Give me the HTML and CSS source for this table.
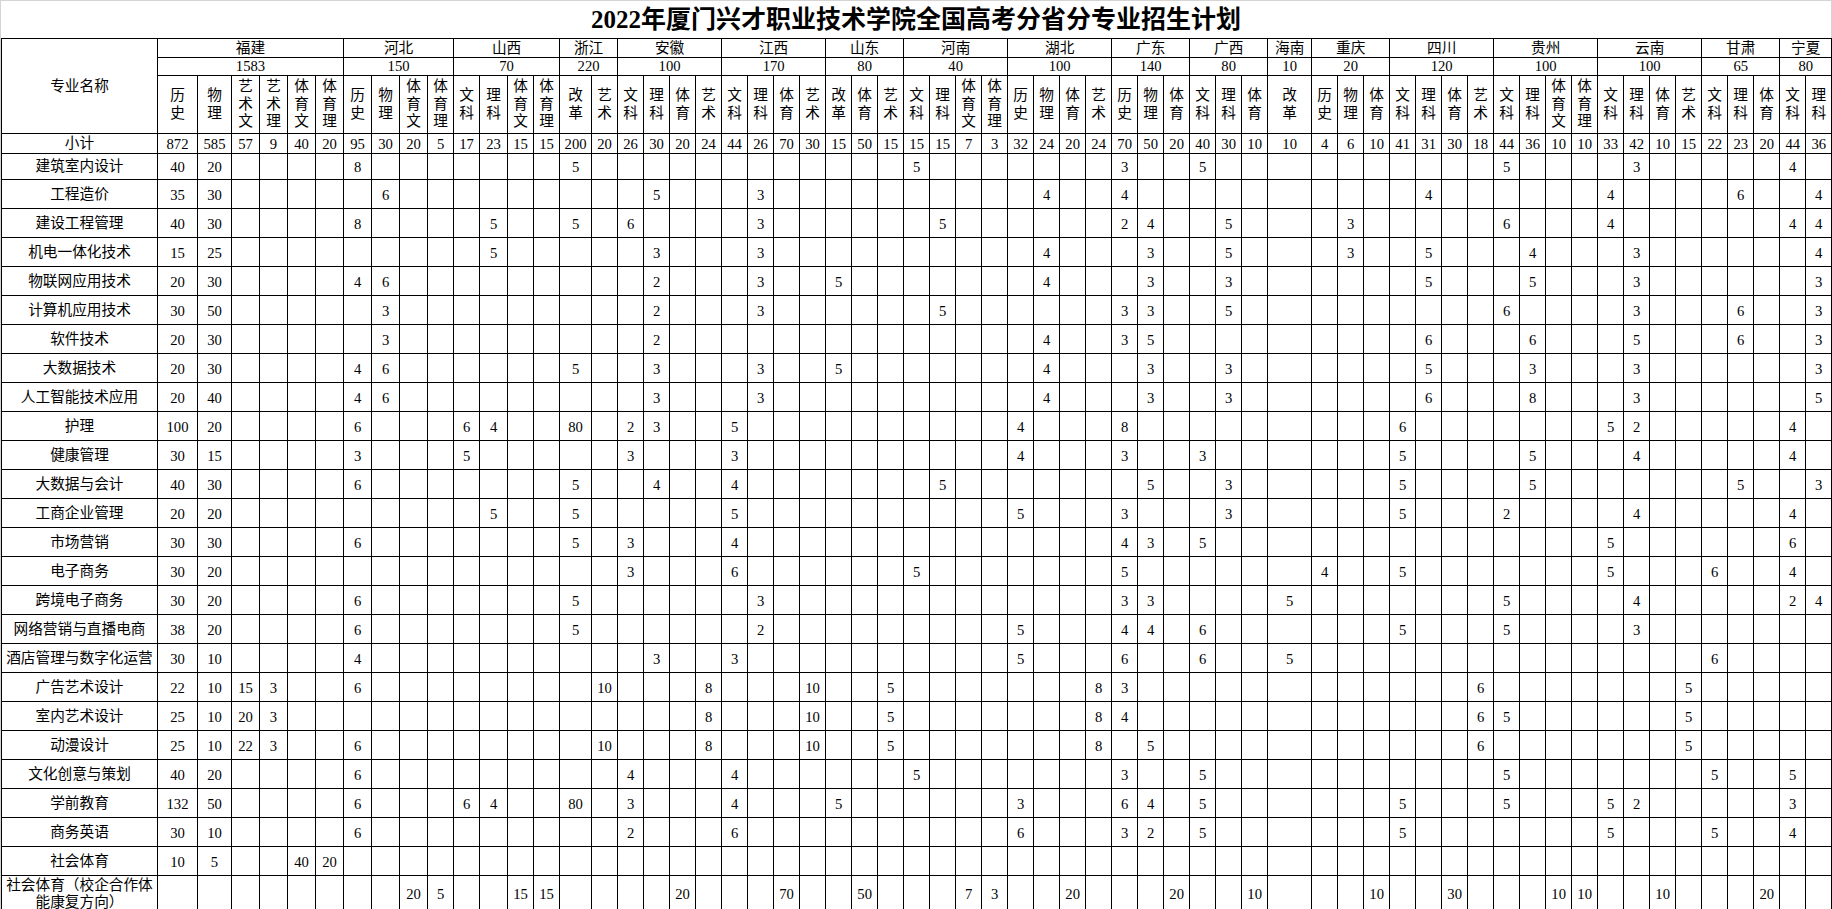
FILE: index.html
```html
<!DOCTYPE html>
<html lang="zh-CN">
<head>
<meta charset="utf-8">
<title>2022年厦门兴才职业技术学院全国高考分省分专业招生计划</title>
<link rel="stylesheet" href="styles.css">
</head>
<body>
<div class="sheet">
<div class="title">2022年厦门兴才职业技术学院全国高考分省分专业招生计划</div>
<table class="plan">
<colgroup>
<col class="c156">
<col class="c40"><col class="c34"><col class="c28"><col class="c28"><col class="c28"><col class="c28">
<col class="c28"><col class="c28"><col class="c28"><col class="c26">
<col class="c26"><col class="c28"><col class="c26"><col class="c26">
<col class="c32"><col class="c26">
<col class="c26"><col class="c26"><col class="c26"><col class="c26">
<col class="c26"><col class="c26"><col class="c26"><col class="c26">
<col class="c26"><col class="c26"><col class="c26">
<col class="c26"><col class="c26"><col class="c26"><col class="c26">
<col class="c26"><col class="c26"><col class="c26"><col class="c26">
<col class="c26"><col class="c26"><col class="c26">
<col class="c26"><col class="c26"><col class="c26">
<col class="c44">
<col class="c26"><col class="c26"><col class="c26">
<col class="c26"><col class="c26"><col class="c26"><col class="c26">
<col class="c26"><col class="c26"><col class="c26"><col class="c26">
<col class="c26"><col class="c26"><col class="c26"><col class="c26">
<col class="c26"><col class="c26"><col class="c26">
<col class="c26"><col class="c26">
</colgroup>
<thead>
<tr class="h-prov">
<th rowspan="3" class="nm">专业名称</th>
<th colspan="6">福建</th><th colspan="4">河北</th><th colspan="4">山西</th><th colspan="2">浙江</th><th colspan="4">安徽</th><th colspan="4">江西</th><th colspan="3">山东</th><th colspan="4">河南</th><th colspan="4">湖北</th><th colspan="3">广东</th><th colspan="3">广西</th><th>海南</th><th colspan="3">重庆</th><th colspan="4">四川</th><th colspan="4">贵州</th><th colspan="4">云南</th><th colspan="3">甘肃</th><th colspan="2">宁夏</th>
</tr>
<tr class="h-total">
<th colspan="6">1583</th><th colspan="4">150</th><th colspan="4">70</th><th colspan="2">220</th><th colspan="4">100</th><th colspan="4">170</th><th colspan="3">80</th><th colspan="4">40</th><th colspan="4">100</th><th colspan="3">140</th><th colspan="3">80</th><th>10</th><th colspan="3">20</th><th colspan="4">120</th><th colspan="4">100</th><th colspan="4">100</th><th colspan="3">65</th><th colspan="2">80</th>
</tr>
<tr class="h-subj">
<th>历<br>史</th><th>物<br>理</th><th>艺<br>术<br>文</th><th>艺<br>术<br>理</th><th>体<br>育<br>文</th><th>体<br>育<br>理</th>
<th>历<br>史</th><th>物<br>理</th><th>体<br>育<br>文</th><th>体<br>育<br>理</th>
<th>文<br>科</th><th>理<br>科</th><th>体<br>育<br>文</th><th>体<br>育<br>理</th>
<th>改<br>革</th><th>艺<br>术</th>
<th>文<br>科</th><th>理<br>科</th><th>体<br>育</th><th>艺<br>术</th>
<th>文<br>科</th><th>理<br>科</th><th>体<br>育</th><th>艺<br>术</th>
<th>改<br>革</th><th>体<br>育</th><th>艺<br>术</th>
<th>文<br>科</th><th>理<br>科</th><th>体<br>育<br>文</th><th>体<br>育<br>理</th>
<th>历<br>史</th><th>物<br>理</th><th>体<br>育</th><th>艺<br>术</th>
<th>历<br>史</th><th>物<br>理</th><th>体<br>育</th>
<th>文<br>科</th><th>理<br>科</th><th>体<br>育</th>
<th>改<br>革</th>
<th>历<br>史</th><th>物<br>理</th><th>体<br>育</th>
<th>文<br>科</th><th>理<br>科</th><th>体<br>育</th><th>艺<br>术</th>
<th>文<br>科</th><th>理<br>科</th><th>体<br>育<br>文</th><th>体<br>育<br>理</th>
<th>文<br>科</th><th>理<br>科</th><th>体<br>育</th><th>艺<br>术</th>
<th>文<br>科</th><th>理<br>科</th><th>体<br>育</th>
<th>文<br>科</th><th>理<br>科</th>
</tr>
</thead>
<tbody>
<tr class="r-sum"><th class="nm">小计</th>
<td>872</td><td>585</td><td>57</td><td>9</td><td>40</td><td>20</td>
<td>95</td><td>30</td><td>20</td><td>5</td>
<td>17</td><td>23</td><td>15</td><td>15</td>
<td>200</td><td>20</td>
<td>26</td><td>30</td><td>20</td><td>24</td>
<td>44</td><td>26</td><td>70</td><td>30</td>
<td>15</td><td>50</td><td>15</td>
<td>15</td><td>15</td><td>7</td><td>3</td>
<td>32</td><td>24</td><td>20</td><td>24</td>
<td>70</td><td>50</td><td>20</td>
<td>40</td><td>30</td><td>10</td>
<td>10</td>
<td>4</td><td>6</td><td>10</td>
<td>41</td><td>31</td><td>30</td><td>18</td>
<td>44</td><td>36</td><td>10</td><td>10</td>
<td>33</td><td>42</td><td>10</td><td>15</td>
<td>22</td><td>23</td><td>20</td>
<td>44</td><td>36</td>
</tr>
<tr class="r-first"><th class="nm">建筑室内设计</th>
<td>40<td>20<td><td><td><td>
<td>8<td><td><td>
<td><td><td><td>
<td>5<td>
<td><td><td><td>
<td><td><td><td>
<td><td><td>
<td>5<td><td><td>
<td><td><td><td>
<td>3<td><td>
<td>5<td><td>
<td>
<td><td><td>
<td><td><td><td>
<td>5<td><td><td>
<td><td>3<td><td>
<td><td><td>
<td>4<td>
</tr>
<tr><th class="nm">工程造价</th>
<td>35<td>30<td><td><td><td>
<td><td>6<td><td>
<td><td><td><td>
<td><td>
<td><td>5<td><td>
<td><td>3<td><td>
<td><td><td>
<td><td><td><td>
<td><td>4<td><td>
<td>4<td><td>
<td><td><td>
<td>
<td><td><td>
<td><td>4<td><td>
<td><td><td><td>
<td>4<td><td><td>
<td><td>6<td>
<td><td>4
</tr>
<tr><th class="nm">建设工程管理</th>
<td>40<td>30<td><td><td><td>
<td>8<td><td><td>
<td><td>5<td><td>
<td>5<td>
<td>6<td><td><td>
<td><td>3<td><td>
<td><td><td>
<td><td>5<td><td>
<td><td><td><td>
<td>2<td>4<td>
<td><td>5<td>
<td>
<td><td>3<td>
<td><td><td><td>
<td>6<td><td><td>
<td>4<td><td><td>
<td><td><td>
<td>4<td>4
</tr>
<tr><th class="nm">机电一体化技术</th>
<td>15<td>25<td><td><td><td>
<td><td><td><td>
<td><td>5<td><td>
<td><td>
<td><td>3<td><td>
<td><td>3<td><td>
<td><td><td>
<td><td><td><td>
<td><td>4<td><td>
<td><td>3<td>
<td><td>5<td>
<td>
<td><td>3<td>
<td><td>5<td><td>
<td><td>4<td><td>
<td><td>3<td><td>
<td><td><td>
<td><td>4
</tr>
<tr><th class="nm">物联网应用技术</th>
<td>20<td>30<td><td><td><td>
<td>4<td>6<td><td>
<td><td><td><td>
<td><td>
<td><td>2<td><td>
<td><td>3<td><td>
<td>5<td><td>
<td><td><td><td>
<td><td>4<td><td>
<td><td>3<td>
<td><td>3<td>
<td>
<td><td><td>
<td><td>5<td><td>
<td><td>5<td><td>
<td><td>3<td><td>
<td><td><td>
<td><td>3
</tr>
<tr><th class="nm">计算机应用技术</th>
<td>30<td>50<td><td><td><td>
<td><td>3<td><td>
<td><td><td><td>
<td><td>
<td><td>2<td><td>
<td><td>3<td><td>
<td><td><td>
<td><td>5<td><td>
<td><td><td><td>
<td>3<td>3<td>
<td><td>5<td>
<td>
<td><td><td>
<td><td><td><td>
<td>6<td><td><td>
<td><td>3<td><td>
<td><td>6<td>
<td><td>3
</tr>
<tr><th class="nm">软件技术</th>
<td>20<td>30<td><td><td><td>
<td><td>3<td><td>
<td><td><td><td>
<td><td>
<td><td>2<td><td>
<td><td><td><td>
<td><td><td>
<td><td><td><td>
<td><td>4<td><td>
<td>3<td>5<td>
<td><td><td>
<td>
<td><td><td>
<td><td>6<td><td>
<td><td>6<td><td>
<td><td>5<td><td>
<td><td>6<td>
<td><td>3
</tr>
<tr><th class="nm">大数据技术</th>
<td>20<td>30<td><td><td><td>
<td>4<td>6<td><td>
<td><td><td><td>
<td>5<td>
<td><td>3<td><td>
<td><td>3<td><td>
<td>5<td><td>
<td><td><td><td>
<td><td>4<td><td>
<td><td>3<td>
<td><td>3<td>
<td>
<td><td><td>
<td><td>5<td><td>
<td><td>3<td><td>
<td><td>3<td><td>
<td><td><td>
<td><td>3
</tr>
<tr><th class="nm">人工智能技术应用</th>
<td>20<td>40<td><td><td><td>
<td>4<td>6<td><td>
<td><td><td><td>
<td><td>
<td><td>3<td><td>
<td><td>3<td><td>
<td><td><td>
<td><td><td><td>
<td><td>4<td><td>
<td><td>3<td>
<td><td>3<td>
<td>
<td><td><td>
<td><td>6<td><td>
<td><td>8<td><td>
<td><td>3<td><td>
<td><td><td>
<td><td>5
</tr>
<tr><th class="nm">护理</th>
<td>100<td>20<td><td><td><td>
<td>6<td><td><td>
<td>6<td>4<td><td>
<td>80<td>
<td>2<td>3<td><td>
<td>5<td><td><td>
<td><td><td>
<td><td><td><td>
<td>4<td><td><td>
<td>8<td><td>
<td><td><td>
<td>
<td><td><td>
<td>6<td><td><td>
<td><td><td><td>
<td>5<td>2<td><td>
<td><td><td>
<td>4<td>
</tr>
<tr><th class="nm">健康管理</th>
<td>30<td>15<td><td><td><td>
<td>3<td><td><td>
<td>5<td><td><td>
<td><td>
<td>3<td><td><td>
<td>3<td><td><td>
<td><td><td>
<td><td><td><td>
<td>4<td><td><td>
<td>3<td><td>
<td>3<td><td>
<td>
<td><td><td>
<td>5<td><td><td>
<td><td>5<td><td>
<td><td>4<td><td>
<td><td><td>
<td>4<td>
</tr>
<tr><th class="nm">大数据与会计</th>
<td>40<td>30<td><td><td><td>
<td>6<td><td><td>
<td><td><td><td>
<td>5<td>
<td><td>4<td><td>
<td>4<td><td><td>
<td><td><td>
<td><td>5<td><td>
<td><td><td><td>
<td><td>5<td>
<td><td>3<td>
<td>
<td><td><td>
<td>5<td><td><td>
<td><td>5<td><td>
<td><td><td><td>
<td><td>5<td>
<td><td>3
</tr>
<tr><th class="nm">工商企业管理</th>
<td>20<td>20<td><td><td><td>
<td><td><td><td>
<td><td>5<td><td>
<td>5<td>
<td><td><td><td>
<td>5<td><td><td>
<td><td><td>
<td><td><td><td>
<td>5<td><td><td>
<td>3<td><td>
<td><td>3<td>
<td>
<td><td><td>
<td>5<td><td><td>
<td>2<td><td><td>
<td><td>4<td><td>
<td><td><td>
<td>4<td>
</tr>
<tr><th class="nm">市场营销</th>
<td>30<td>30<td><td><td><td>
<td>6<td><td><td>
<td><td><td><td>
<td>5<td>
<td>3<td><td><td>
<td>4<td><td><td>
<td><td><td>
<td><td><td><td>
<td><td><td><td>
<td>4<td>3<td>
<td>5<td><td>
<td>
<td><td><td>
<td><td><td><td>
<td><td><td><td>
<td>5<td><td><td>
<td><td><td>
<td>6<td>
</tr>
<tr><th class="nm">电子商务</th>
<td>30<td>20<td><td><td><td>
<td><td><td><td>
<td><td><td><td>
<td><td>
<td>3<td><td><td>
<td>6<td><td><td>
<td><td><td>
<td>5<td><td><td>
<td><td><td><td>
<td>5<td><td>
<td><td><td>
<td>
<td>4<td><td>
<td>5<td><td><td>
<td><td><td><td>
<td>5<td><td><td>
<td>6<td><td>
<td>4<td>
</tr>
<tr><th class="nm">跨境电子商务</th>
<td>30<td>20<td><td><td><td>
<td>6<td><td><td>
<td><td><td><td>
<td>5<td>
<td><td><td><td>
<td><td>3<td><td>
<td><td><td>
<td><td><td><td>
<td><td><td><td>
<td>3<td>3<td>
<td><td><td>
<td>5
<td><td><td>
<td><td><td><td>
<td>5<td><td><td>
<td><td>4<td><td>
<td><td><td>
<td>2<td>4
</tr>
<tr><th class="nm">网络营销与直播电商</th>
<td>38<td>20<td><td><td><td>
<td>6<td><td><td>
<td><td><td><td>
<td>5<td>
<td><td><td><td>
<td><td>2<td><td>
<td><td><td>
<td><td><td><td>
<td>5<td><td><td>
<td>4<td>4<td>
<td>6<td><td>
<td>
<td><td><td>
<td>5<td><td><td>
<td>5<td><td><td>
<td><td>3<td><td>
<td><td><td>
<td><td>
</tr>
<tr><th class="nm">酒店管理与数字化运营</th>
<td>30<td>10<td><td><td><td>
<td>4<td><td><td>
<td><td><td><td>
<td><td>
<td><td>3<td><td>
<td>3<td><td><td>
<td><td><td>
<td><td><td><td>
<td>5<td><td><td>
<td>6<td><td>
<td>6<td><td>
<td>5
<td><td><td>
<td><td><td><td>
<td><td><td><td>
<td><td><td><td>
<td>6<td><td>
<td><td>
</tr>
<tr><th class="nm">广告艺术设计</th>
<td>22<td>10<td>15<td>3<td><td>
<td>6<td><td><td>
<td><td><td><td>
<td><td>10
<td><td><td><td>8
<td><td><td><td>10
<td><td><td>5
<td><td><td><td>
<td><td><td><td>8
<td>3<td><td>
<td><td><td>
<td>
<td><td><td>
<td><td><td><td>6
<td><td><td><td>
<td><td><td><td>5
<td><td><td>
<td><td>
</tr>
<tr><th class="nm">室内艺术设计</th>
<td>25<td>10<td>20<td>3<td><td>
<td><td><td><td>
<td><td><td><td>
<td><td>
<td><td><td><td>8
<td><td><td><td>10
<td><td><td>5
<td><td><td><td>
<td><td><td><td>8
<td>4<td><td>
<td><td><td>
<td>
<td><td><td>
<td><td><td><td>6
<td>5<td><td><td>
<td><td><td><td>5
<td><td><td>
<td><td>
</tr>
<tr><th class="nm">动漫设计</th>
<td>25<td>10<td>22<td>3<td><td>
<td>6<td><td><td>
<td><td><td><td>
<td><td>10
<td><td><td><td>8
<td><td><td><td>10
<td><td><td>5
<td><td><td><td>
<td><td><td><td>8
<td><td>5<td>
<td><td><td>
<td>
<td><td><td>
<td><td><td><td>6
<td><td><td><td>
<td><td><td><td>5
<td><td><td>
<td><td>
</tr>
<tr><th class="nm">文化创意与策划</th>
<td>40<td>20<td><td><td><td>
<td>6<td><td><td>
<td><td><td><td>
<td><td>
<td>4<td><td><td>
<td>4<td><td><td>
<td><td><td>
<td>5<td><td><td>
<td><td><td><td>
<td>3<td><td>
<td>5<td><td>
<td>
<td><td><td>
<td><td><td><td>
<td>5<td><td><td>
<td><td><td><td>
<td>5<td><td>
<td>5<td>
</tr>
<tr><th class="nm">学前教育</th>
<td>132<td>50<td><td><td><td>
<td>6<td><td><td>
<td>6<td>4<td><td>
<td>80<td>
<td>3<td><td><td>
<td>4<td><td><td>
<td>5<td><td>
<td><td><td><td>
<td>3<td><td><td>
<td>6<td>4<td>
<td>5<td><td>
<td>
<td><td><td>
<td>5<td><td><td>
<td>5<td><td><td>
<td>5<td>2<td><td>
<td><td><td>
<td>3<td>
</tr>
<tr><th class="nm">商务英语</th>
<td>30<td>10<td><td><td><td>
<td>6<td><td><td>
<td><td><td><td>
<td><td>
<td>2<td><td><td>
<td>6<td><td><td>
<td><td><td>
<td><td><td><td>
<td>6<td><td><td>
<td>3<td>2<td>
<td>5<td><td>
<td>
<td><td><td>
<td>5<td><td><td>
<td><td><td><td>
<td>5<td><td><td>
<td>5<td><td>
<td>4<td>
</tr>
<tr><th class="nm">社会体育</th>
<td>10<td>5<td><td><td>40<td>20
<td><td><td><td>
<td><td><td><td>
<td><td>
<td><td><td><td>
<td><td><td><td>
<td><td><td>
<td><td><td><td>
<td><td><td><td>
<td><td><td>
<td><td><td>
<td>
<td><td><td>
<td><td><td><td>
<td><td><td><td>
<td><td><td><td>
<td><td><td>
<td><td>
</tr>
<tr class="r-last"><th class="nm wrap">社会体育（校企合作体能康复方向）</th>
<td><td><td><td><td><td>
<td><td><td>20<td>5
<td><td><td>15<td>15
<td><td>
<td><td><td>20<td>
<td><td><td>70<td>
<td><td>50<td>
<td><td><td>7<td>3
<td><td><td>20<td>
<td><td><td>20
<td><td><td>10
<td>
<td><td><td>10
<td><td><td>30<td>
<td><td><td>10<td>10
<td><td><td>10<td>
<td><td><td>20
<td><td>
</tr>
</tbody>
</table>
</div>
</body>
</html>
```

FILE: styles.css
```css
html, body {
  margin: 0;
  padding: 0;
  background: #ffffff;
}

body {
  font-family: "Liberation Serif", "Noto Sans CJK SC", serif;
  color: #000000;
}

.sheet {
  width: 1832px;
  height: 909px;
  box-sizing: border-box;
  border-top: 1px solid #d4d4d4;
  border-left: 1px solid #d4d4d4;
  overflow: hidden;
  background: #ffffff;
}

.title {
  height: 37px;
  line-height: 38px;
  text-align: center;
  font-family: "Liberation Serif", "Noto Sans CJK SC", sans-serif;
  font-size: 25px;
  font-weight: 700;
  border-right: 1px solid #d4d4d4;
  box-sizing: border-box;
  width: 1831px;
}

.plan {
  border-collapse: collapse;
  table-layout: fixed;
  width: 1831px;
  font-size: 14.67px;
}

.plan th,
.plan td {
  border: 1px solid #000000;
  padding: 0;
  text-align: center;
  vertical-align: middle;
  font-weight: normal;
  white-space: nowrap;
  overflow: hidden;
  line-height: 17px;
}

.c156 { width: 156px; }
.c44 { width: 44px; }
.c40 { width: 40px; }
.c34 { width: 34px; }
.c32 { width: 32px; }
.c28 { width: 28px; }
.c26 { width: 26px; }

.h-prov { height: 19px; }
.h-total { height: 17px; }
.h-subj { height: 58px; }
.h-subj th { line-height: 17.5px; }
.plan tbody tr { height: 29px; }
.plan tbody tr.r-sum { height: 18px; }
.plan tbody tr.r-first { height: 26px; }
.plan tbody tr.r-last { height: 36px; }

.plan td {
  padding-top: 2px;
}

.plan .wrap {
  white-space: normal;
  line-height: 17px;
  padding: 0 2px;
}
```
